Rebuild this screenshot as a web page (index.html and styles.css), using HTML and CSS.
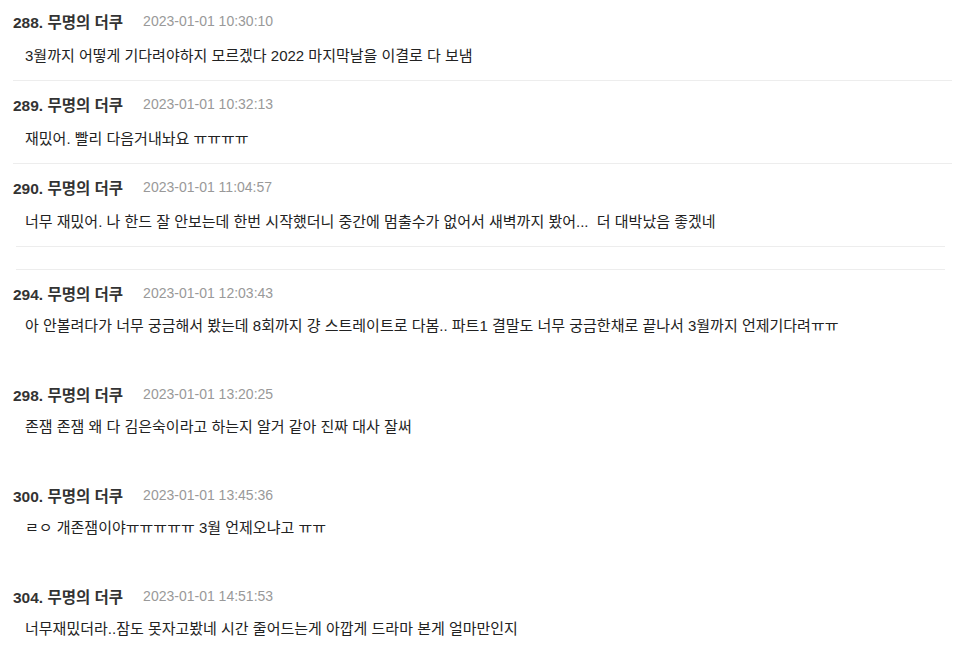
FILE: index.html
```html
<!DOCTYPE html>
<html lang="ko">

<head>
    <meta charset="UTF-8">
    <meta name="viewport" content="width=device-width, initial-scale=1.0">
    <title>댓글</title>
    <link rel="stylesheet" href="styles.css">
</head>

<body>
    <!-- 첫번째 댓글 묶음 -->
    <div class="comment-list">
        <div class="comment first">
            <div class="comment-head"><span class="comment-name">288. 무명의 더쿠</span><span class="comment-date">2023-01-01 10:30:10</span></div>
            <p class="comment-text">3월까지 어떻게 기다려야하지 모르겠다 2022 마지막날을 이결로 다 보냄</p>
        </div>
        <div class="comment">
            <div class="comment-head"><span class="comment-name">289. 무명의 더쿠</span><span class="comment-date">2023-01-01 10:32:13</span></div>
            <p class="comment-text">재밌어. 빨리 다음거내놔요 ㅠㅠㅠㅠ</p>
        </div>
        <div class="comment short">
            <div class="comment-head"><span class="comment-name">290. 무명의 더쿠</span><span class="comment-date">2023-01-01 11:04:57</span></div>
            <p class="comment-text">너무 재밌어. 나 한드 잘 안보는데 한번 시작했더니 중간에 멈출수가 없어서 새벽까지 봤어...&nbsp; 더 대박났음 좋겠네</p>
        </div>
    </div>

    <!-- 두번째 묶음 -->
    <div class="comment-list wide">
        <div class="comment">
            <div class="comment-head"><span class="comment-name">294. 무명의 더쿠</span><span class="comment-date">2023-01-01 12:03:43</span></div>
            <p class="comment-text">아 안볼려다가 너무 궁금해서 봤는데 8회까지 걍 스트레이트로 다봄.. 파트1 결말도 너무 궁금한채로 끝나서 3월까지 언제기다려ㅠㅠ</p>
        </div>
        <div class="comment">
            <div class="comment-head"><span class="comment-name">298. 무명의 더쿠</span><span class="comment-date">2023-01-01 13:20:25</span></div>
            <p class="comment-text">존잼 존잼 왜 다 김은숙이라고 하는지 알거 같아 진짜 대사 잘써</p>
        </div>
        <div class="comment">
            <div class="comment-head"><span class="comment-name">300. 무명의 더쿠</span><span class="comment-date">2023-01-01 13:45:36</span></div>
            <p class="comment-text">ㄹㅇ 개존잼이야ㅠㅠㅠㅠㅠ 3월 언제오냐고 ㅠㅠ</p>
        </div>
        <div class="comment">
            <div class="comment-head"><span class="comment-name">304. 무명의 더쿠</span><span class="comment-date">2023-01-01 14:51:53</span></div>
            <p class="comment-text">너무재밌더라..잠도 못자고봤네 시간 줄어드는게 아깝게 드라마 본게 얼마만인지</p>
        </div>
    </div>
</body>

</html>
```

FILE: styles.css
```css
/* 기본 */
body {
    font-family: "Liberation Sans", "Noto Sans CJK KR", sans-serif;
    background-color: #fff;
    margin: 0;
    padding: 0;
    color: #222;
}

.comment-list {
    margin: 0 8px 0 13px;
}

.comment {
    padding: 14px 0 14px 0;
    border-bottom: 1px solid #ededed;
}

.comment.first {
    padding-top: 12px;
}

/* 290번은 구분선이 조금 짧음 */
.comment.short {
    padding-bottom: 0;
    border-bottom: none;
}

.comment.short::after {
    content: "";
    display: block;
    height: 1px;
    margin: 14px 7px 0 3px;
    background-color: #ededed;
}

.comment-head {
    display: flex;
    align-items: center;
    height: 18px;
}

.comment-name {
    font-size: 15.5px;
    font-weight: bold;
    color: #333;
}

.comment-date {
    font-size: 14px;
    color: #999;
    margin-left: 20px;
}

.comment-text {
    font-size: 15px;
    line-height: 20px;
    margin: 16px 0 0 12px;
}

/* 두번째 묶음: 위쪽 선만 있고 구분선 없음 */
.comment-list.wide {
    margin: 22px 15px 0 16px;
    border-top: 1px solid #ededed;
}

.comment-list.wide .comment {
    padding: 14px 0 35px 0;
    border-bottom: none;
}

.comment-list.wide .comment-head {
    margin-left: -3px;
}

.comment-list.wide .comment-text {
    margin: 14px 0 0 9px;
}
```
